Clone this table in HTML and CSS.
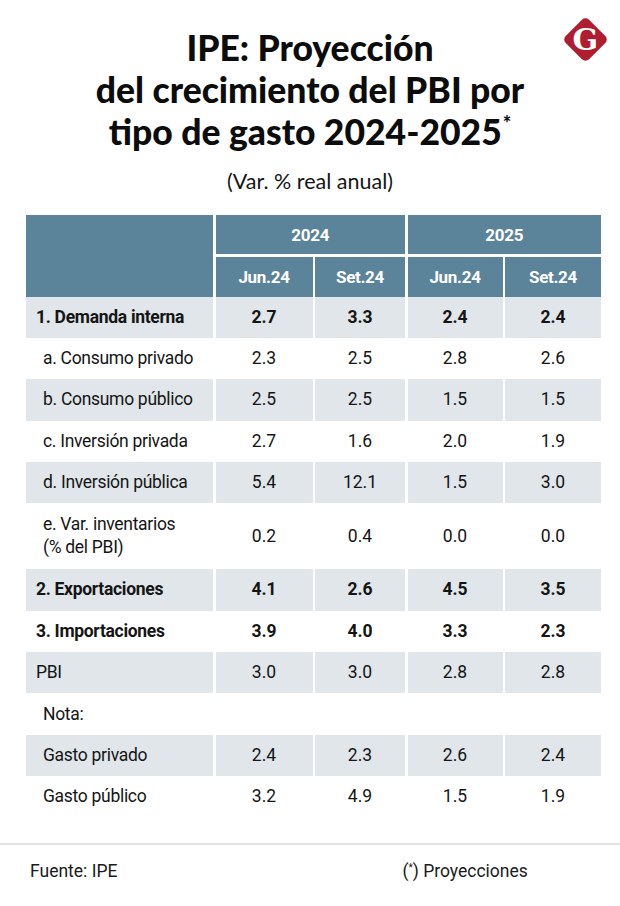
FILE: index.html
```html
<!DOCTYPE html>
<html lang="es">
<head>
<meta charset="utf-8">
<title>IPE: Proyección del crecimiento del PBI</title>
<link rel="stylesheet" href="styles.css">
</head>
<body>
<div class="page">
  <header class="head">
    <h1 class="title">IPE: Proyección<br>del crecimiento del PBI por<br>tipo de gasto 2024-2025<sup class="ast">*</sup></h1>
    <div class="logo"><span class="logo-g">G</span></div>
    <p class="subtitle">(Var. % real anual)</p>
  </header>

  <div class="table">
    <div class="thead">
      <div class="th th-blank"></div>
      <div class="th th-year y24">2024</div>
      <div class="th th-year y25">2025</div>
      <div class="th">Jun.24</div>
      <div class="th">Set.24</div>
      <div class="th">Jun.24</div>
      <div class="th">Set.24</div>
    </div>

    <div class="row alt bold">
      <div class="c lbl">1. Demanda interna</div><div class="c">2.7</div><div class="c">3.3</div><div class="c">2.4</div><div class="c">2.4</div>
    </div>
    <div class="row">
      <div class="c lbl sub">a. Consumo privado</div><div class="c">2.3</div><div class="c">2.5</div><div class="c">2.8</div><div class="c">2.6</div>
    </div>
    <div class="row alt">
      <div class="c lbl sub">b. Consumo público</div><div class="c">2.5</div><div class="c">2.5</div><div class="c">1.5</div><div class="c">1.5</div>
    </div>
    <div class="row">
      <div class="c lbl sub">c. Inversión privada</div><div class="c">2.7</div><div class="c">1.6</div><div class="c">2.0</div><div class="c">1.9</div>
    </div>
    <div class="row alt">
      <div class="c lbl sub">d. Inversión pública</div><div class="c">5.4</div><div class="c">12.1</div><div class="c">1.5</div><div class="c">3.0</div>
    </div>
    <div class="row tall">
      <div class="c lbl sub">e. Var. inventarios<br>(% del PBI)</div><div class="c">0.2</div><div class="c">0.4</div><div class="c">0.0</div><div class="c">0.0</div>
    </div>
    <div class="row alt bold">
      <div class="c lbl">2. Exportaciones</div><div class="c">4.1</div><div class="c">2.6</div><div class="c">4.5</div><div class="c">3.5</div>
    </div>
    <div class="row bold">
      <div class="c lbl">3. Importaciones</div><div class="c">3.9</div><div class="c">4.0</div><div class="c">3.3</div><div class="c">2.3</div>
    </div>
    <div class="row alt">
      <div class="c lbl">PBI</div><div class="c">3.0</div><div class="c">3.0</div><div class="c">2.8</div><div class="c">2.8</div>
    </div>
    <div class="row">
      <div class="c lbl sub">Nota:</div><div class="c"></div><div class="c"></div><div class="c"></div><div class="c"></div>
    </div>
    <div class="row alt">
      <div class="c lbl sub">Gasto privado</div><div class="c">2.4</div><div class="c">2.3</div><div class="c">2.6</div><div class="c">2.4</div>
    </div>
    <div class="row">
      <div class="c lbl sub">Gasto público</div><div class="c">3.2</div><div class="c">4.9</div><div class="c">1.5</div><div class="c">1.9</div>
    </div>
  </div>

  <footer class="foot">
    <span class="src">Fuente: IPE</span>
    <span class="note">(<sup class="fast">*</sup>) Proyecciones</span>
  </footer>
</div>
</body>
</html>
```

FILE: styles.css
```css
* { box-sizing: border-box; }
html, body { margin: 0; padding: 0; background: #fff; }
body {
  width: 620px;
  height: 906px;
  overflow: hidden;
  font-family: Roboto, "Noto Sans", "Liberation Sans", sans-serif;
  color: #151515;
}
.page { width: 620px; }

.head {
  position: relative;
  padding-top: 27px;
  text-align: center;
}
.title {
  margin: 0;
  font-family: Lato, "Noto Sans", sans-serif;
  font-weight: 900;
  font-size: 35.5px;
  line-height: 42px;
  color: #0c0c0c;
}
.ast {
  font-size: 20px;
  font-weight: 900;
  line-height: 0;
  vertical-align: 0;
  position: relative;
  top: -14px;
  margin-left: 1px;
}
.subtitle {
  margin: 16px 0 0;
  font-family: Lato, "Noto Sans", sans-serif;
  font-size: 21.5px;
  line-height: 24px;
  color: #151515;
}

.logo {
  position: absolute;
  left: 569px;
  top: 23px;
  width: 33px;
  height: 33px;
  background: #b01d2f;
  border-radius: 5px;
  transform: rotate(45deg);
  display: flex;
  align-items: center;
  justify-content: center;
}
.logo-g {
  transform: rotate(-45deg);
  font-family: "DejaVu Serif", "Liberation Serif", serif;
  font-weight: 700;
  font-size: 30px;
  line-height: 1;
  color: #fff;
}

.table {
  margin: 22px 0 0 26px;
  width: 575px;
}
.thead {
  display: grid;
  grid-template-columns: 187px 97px 90px 95px 96px;
  grid-template-rows: 39px 40px;
  column-gap: 2.5px;
  row-gap: 2.5px;
}
.th {
  background: #5b8399;
  color: #fff;
  font-weight: 700;
  font-size: 17px;
  display: flex;
  align-items: center;
  justify-content: center;
  letter-spacing: -0.3px;
}
.th-blank { grid-row: 1 / span 2; grid-column: 1; }
.y24 { grid-column: 2 / span 2; }
.y25 { grid-column: 4 / span 2; }

.row {
  display: grid;
  grid-template-columns: 187px 97px 90px 95px 96px;
  column-gap: 2.5px;
  height: 41.36px;
}
.row.tall { height: 66px; }
.c {
  display: flex;
  align-items: center;
  justify-content: center;
  font-size: 17.5px;
  line-height: 23px;
  color: #151515;
}
.row.alt .c { background: #e0e6ea; }
.row.bold .c { font-weight: 700; }
.c.lbl {
  justify-content: flex-start;
  padding-left: 10px;
  letter-spacing: -0.3px;
}
.c.lbl.sub { padding-left: 17px; }

.foot {
  margin-top: 26px;
  border-top: 2px solid #e2e2e2;
  height: 70px;
  display: flex;
  align-items: flex-start;
  padding-top: 15px;
  font-size: 17.5px;
  line-height: 22px;
  color: #1a1a1a;
}
.src { margin-left: 30px; }
.note { margin-left: 285px; }
.fast { font-size: 10px; line-height: 0; vertical-align: 0; position: relative; top: -6px; }
```
